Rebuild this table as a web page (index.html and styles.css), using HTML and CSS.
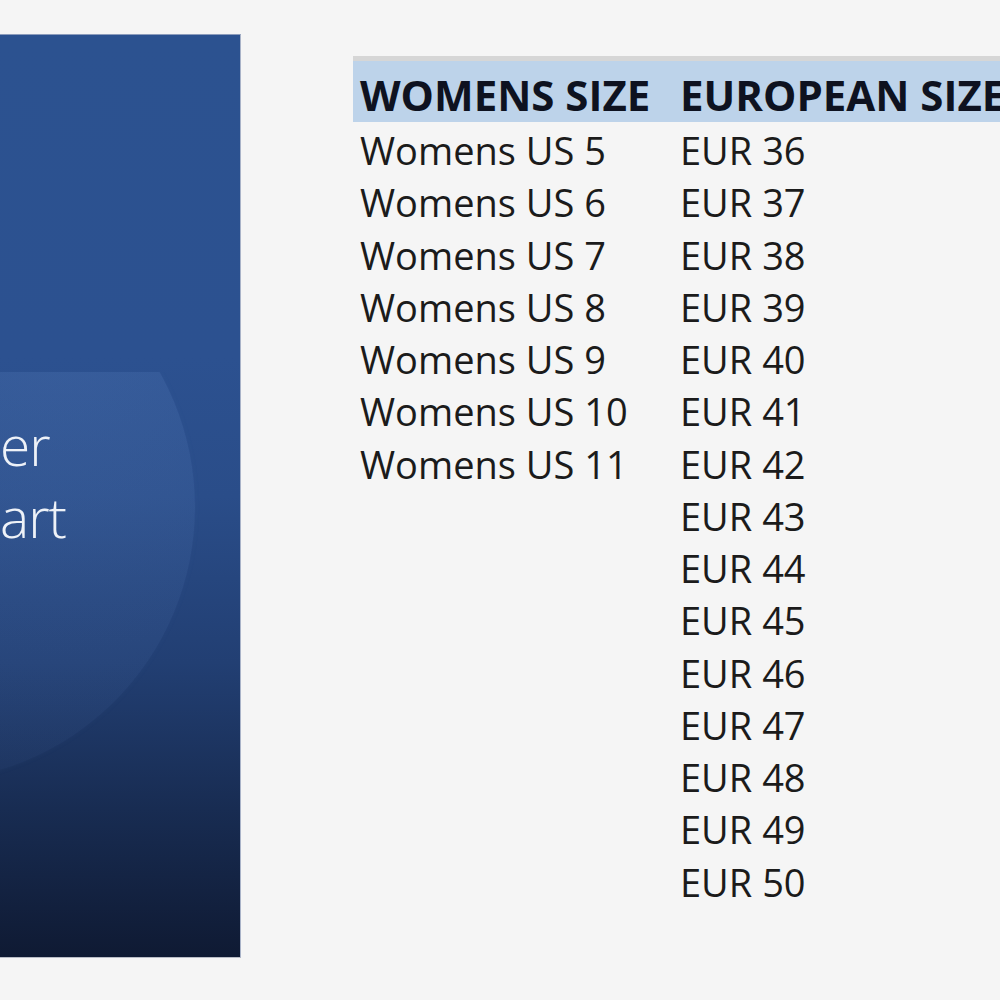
FILE: index.html
```html
<!DOCTYPE html>
<html>
<head>
<meta charset="utf-8">
<link rel="stylesheet" href="styles.css">
</head>
<body>
<div class="page">
  <div class="slide">
    <div class="glow"><div class="circle"></div></div>
    <div class="title">
      <div class="line">er</div>
      <div class="line">art</div>
    </div>
  </div>
  <div class="sheet">
    <div class="grid">
      <div class="head first">WOMENS SIZE</div>
      <div class="head">EUROPEAN SIZE</div>
      <div class="cell c1">Womens US 5</div><div class="cell c2">EUR 36</div>
      <div class="cell c1">Womens US 6</div><div class="cell c2">EUR 37</div>
      <div class="cell c1">Womens US 7</div><div class="cell c2">EUR 38</div>
      <div class="cell c1">Womens US 8</div><div class="cell c2">EUR 39</div>
      <div class="cell c1">Womens US 9</div><div class="cell c2">EUR 40</div>
      <div class="cell c1">Womens US 10</div><div class="cell c2">EUR 41</div>
      <div class="cell c1">Womens US 11</div><div class="cell c2">EUR 42</div>
      <div class="cell c1"></div><div class="cell c2">EUR 43</div>
      <div class="cell c1"></div><div class="cell c2">EUR 44</div>
      <div class="cell c1"></div><div class="cell c2">EUR 45</div>
      <div class="cell c1"></div><div class="cell c2">EUR 46</div>
      <div class="cell c1"></div><div class="cell c2">EUR 47</div>
      <div class="cell c1"></div><div class="cell c2">EUR 48</div>
      <div class="cell c1"></div><div class="cell c2">EUR 49</div>
      <div class="cell c1"></div><div class="cell c2">EUR 50</div>
    </div>
  </div>
</div>
</body>
</html>
```
FILE: styles.css
```css
html, body {
  margin: 0;
  padding: 0;
  background: #f5f5f5;
  width: 1000px;
  height: 1000px;
  overflow: hidden;
}
.page {
  display: flex;
  align-items: flex-start;
  width: 1000px;
  height: 1000px;
  overflow: hidden;
}
.slide {
  position: relative;
  flex: 0 0 241px;
  width: 241px;
  height: 924px;
  margin-top: 34px;
  box-sizing: border-box;
  border-top: 1px solid #8c9cbc;
  border-right: 1px solid #a9b3c8;
  border-bottom: 1px solid #b8bcc6;
  background: linear-gradient(180deg, #2c5290 0%, #2c5190 35%, #2a4d89 50%, #223f73 68%, #182c52 84%, #0f1a33 100%);
  overflow: hidden;
}
.glow {
  position: absolute;
  left: 0;
  top: 337px;
  width: 240px;
  height: 600px;
  overflow: hidden;
}
.circle {
  position: absolute;
  left: -355px;
  top: -140px;
  width: 550px;
  height: 550px;
  border-radius: 50%;
  background: radial-gradient(circle at 75% 15%, rgba(120,160,220,0.16), rgba(90,130,200,0.06) 75%);
  box-shadow: 0 0 6px rgba(90,130,200,0.05);
}
.title {
  position: relative;
  padding-top: 374px;
  font-family: "Open Sans", sans-serif;
  font-weight: 300;
  font-size: 55px;
  line-height: 72px;
  color: #eef2f8;
  letter-spacing: -1px;
}
.line {
  white-space: nowrap;
}
.sheet {
  flex: 1 1 auto;
  margin-left: 112px;
  margin-top: 56px;
  overflow: hidden;
}
.grid {
  display: grid;
  grid-template-columns: 319px 400px;
  font-family: "Open Sans", sans-serif;
  white-space: nowrap;
}
.head {
  border-top: 5px solid #d6d6d6;
  background: #bdd3ea;
  height: 66px;
  box-sizing: border-box;
  padding: 4px 0 0 8px;
  line-height: 59px;
  font-size: 42px;
  font-weight: 700;
  color: #0e1220;
}
.head.first {
  padding-left: 7px;
}
.head + .cell, .c2:nth-of-type(4) {
  margin-top: 2px;
}
.cell {
  font-size: 38px;
  line-height: 52.25px;
  height: 52.25px;
  color: #1b1b1b;
}
.c1 {
  padding-left: 7px;
}
.c2 {
  padding-left: 8px;
}
```
